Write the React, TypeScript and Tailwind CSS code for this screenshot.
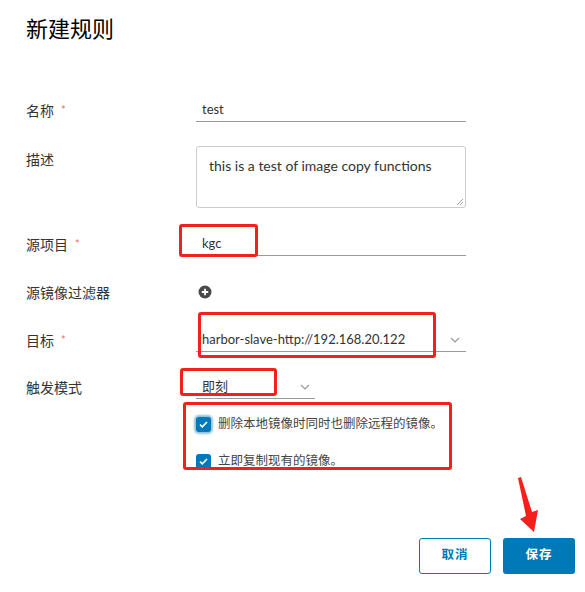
import { ReactNode } from "react";

const font = { fontFamily: "Lato, 'Noto Sans CJK SC', sans-serif" };

function Label({ text, required }: { text: string; required?: boolean }) {
  return (
    <div className="flex w-[170px] shrink-0 items-center text-[14px] text-[#333]">
      <span>{text}</span>
      {required && <span className="ml-[7px] text-[11px] text-[#e46b5e]">*</span>}
    </div>
  );
}

function Row({ children, className = "" }: { children: ReactNode; className?: string }) {
  return <div className={`flex h-6 ${className}`}>{children}</div>;
}

function Chevron() {
  return (
    <svg width="10" height="6" viewBox="0 0 10 6" className="text-[#999]">
      <path d="M1 1l4 4 4-4" fill="none" stroke="currentColor" strokeWidth="1.2" />
    </svg>
  );
}

function Checkbox({ focused }: { focused?: boolean }) {
  return (
    <span
      className={`flex h-[15px] w-[15px] shrink-0 items-center justify-center rounded-[3px] bg-[#0079b8] ${
        focused ? "shadow-[0_0_2px_2px_rgba(0,121,184,0.45)]" : ""
      }`}
    >
      <svg width="9" height="7" viewBox="0 0 9 7">
        <path d="M1 3.6l2.3 2.2L8 1" fill="none" stroke="white" strokeWidth="1.6" />
      </svg>
    </span>
  );
}

export default function App() {
  return (
    <div className="relative h-[592px] w-[585px] overflow-hidden bg-white" style={font}>
      <h1 className="pl-[26px] pt-[14px] text-[22px] leading-[30px] text-black">新建规则</h1>

      <div className="mt-[54px] flex flex-col gap-6 pl-[26px]">
        <Row>
          <Label text="名称" required />
          <div className="flex w-[270px] items-center border-b border-[#9a9a9a] pl-[6px] text-[13px] text-[#333]">
            test
          </div>
        </Row>

        <div className="flex h-[62px]">
          <div className="w-[170px] shrink-0 pt-[3px] text-[14px] text-[#333]">描述</div>
          <div className="relative w-[270px] rounded-[3px] border border-[#ccc] px-[12px] pt-[8px] text-[14px] text-[#333]">
            this is a test of image copy functions
            <svg width="8" height="8" viewBox="0 0 8 8" className="absolute bottom-[1px] right-[1px]">
              <path d="M1 7L7 1M4 7L7 4" stroke="#888" strokeWidth="0.8" />
            </svg>
          </div>
        </div>

        <Row>
          <Label text="源项目" required />
          <div className="flex w-[270px] items-center border-b border-[#9a9a9a] pl-[6px] text-[13px] text-[#333]">
            kgc
          </div>
        </Row>

        <Row>
          <Label text="源镜像过滤器" />
          <div className="flex items-center pl-[2px]">
            <svg width="14" height="14" viewBox="0 0 14 14">
              <circle cx="7" cy="7" r="6.5" fill="#4a4a4a" />
              <path d="M7 3.8v6.4M3.8 7h6.4" stroke="white" strokeWidth="1.8" />
            </svg>
          </div>
        </Row>

        <Row>
          <Label text="目标" required />
          <div className="flex w-[270px] items-center justify-between border-b border-[#9a9a9a] pl-[6px] pr-[6px] text-[13px] text-[#333]">
            <span>harbor-slave-http://192.168.20.122</span>
            <Chevron />
          </div>
        </Row>

        <Row className="h-[23px]">
          <Label text="触发模式" />
          <div className="flex w-[119px] items-center justify-between border-b border-[#9a9a9a] pl-[6px] pr-[5px] text-[13px] text-[#333]">
            <span>即刻</span>
            <Chevron />
          </div>
        </Row>
      </div>

      <div className="mt-[16px] flex flex-col gap-[18px] pl-[196px] text-[12.5px] text-[#444]">
        <label className="flex items-center gap-[7px]">
          <Checkbox focused />
          <span>删除本地镜像时同时也删除远程的镜像。</span>
        </label>
        <label className="flex items-center gap-[7px]">
          <Checkbox />
          <span>立即复制现有的镜像。</span>
        </label>
      </div>

      <div className="mt-[67px] flex justify-end gap-[12px] pr-[10px]">
        <button className="h-[36px] w-[72px] rounded-[3px] border border-[#0079b8] text-[12.5px] font-bold tracking-[1px] text-[#0079b8]">
          取消
        </button>
        <button className="h-[36px] w-[72px] rounded-[3px] bg-[#0079b8] text-[12.5px] font-bold tracking-[1px] text-white">
          保存
        </button>
      </div>

      {/* red annotation marks */}
      <div className="pointer-events-none absolute left-[179px] top-[224px] h-[33px] w-[79px] rounded-[3px] border-[3px] border-[#f5201c]" />
      <div className="pointer-events-none absolute left-[198px] top-[312px] h-[46px] w-[238px] rounded-[3px] border-[3px] border-[#f5201c]" />
      <div className="pointer-events-none absolute left-[180px] top-[368px] h-[28px] w-[97px] rounded-[3px] border-[3px] border-[#f5201c]" />
      <div className="pointer-events-none absolute left-[183px] top-[402px] h-[68px] w-[269px] rounded-[3px] border-[3px] border-[#f5201c]" />
      <svg className="pointer-events-none absolute left-0 top-0" width="585" height="592">
        <polygon points="518,478 521,477 532,512 538,510 534,532 520,519 526,516" fill="#f5201c" />
      </svg>
    </div>
  );
}
